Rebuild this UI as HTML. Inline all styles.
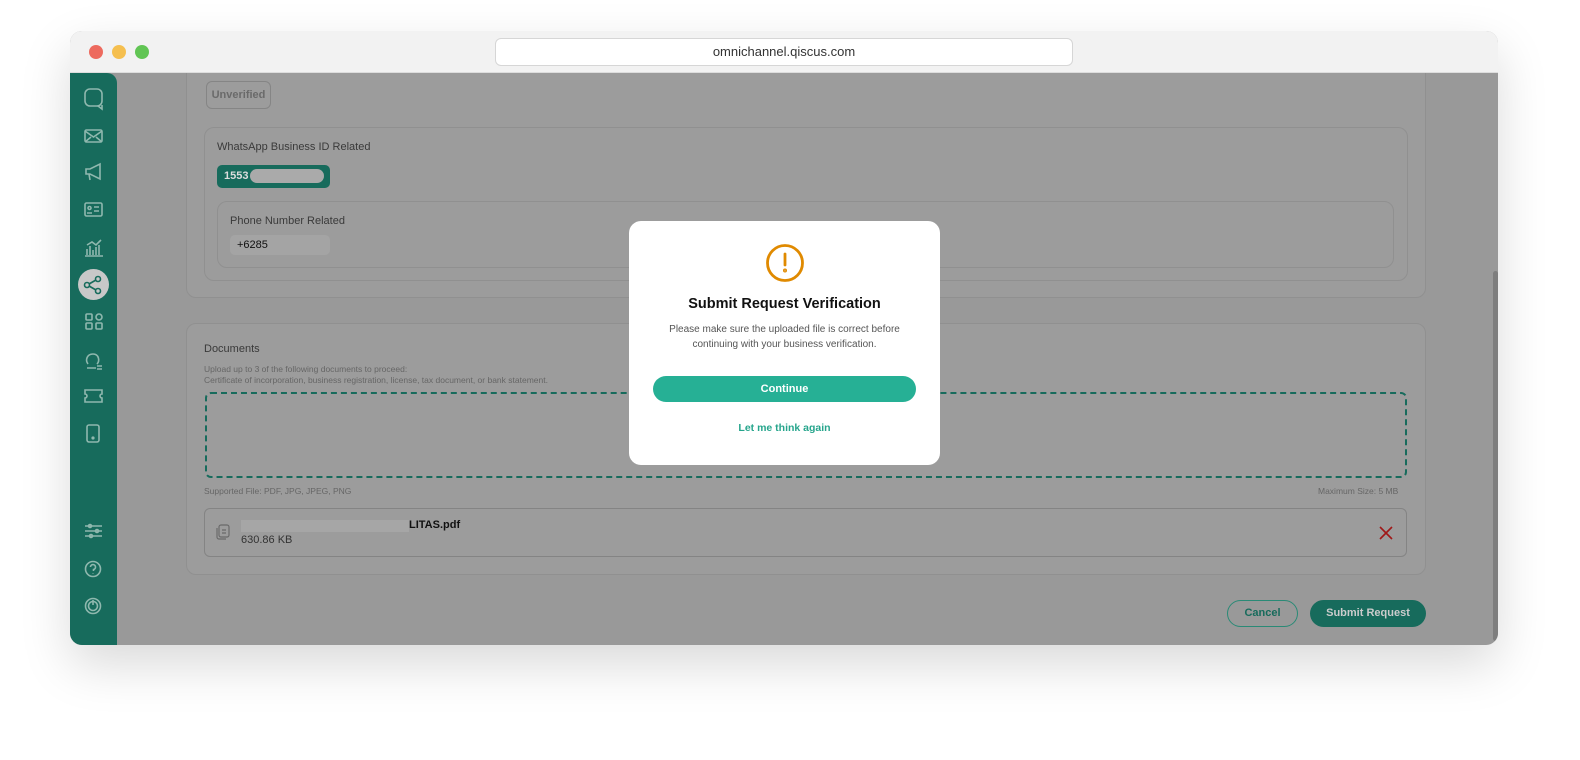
<!DOCTYPE html>
<html><head><style>
*{box-sizing:border-box;margin:0;padding:0}
body{width:1580px;height:760px;background:#fff;font-family:"Liberation Sans",sans-serif;position:relative;overflow:hidden}
.win{position:absolute;left:70px;top:31px;width:1428px;height:614px;border-radius:12px;overflow:hidden;background:#999;box-shadow:0 20px 50px rgba(0,0,0,.15)}
.tb{position:absolute;left:0;top:0;width:100%;height:42px;background:#f2f2f2;border-bottom:1px solid #ddd;z-index:5}
.dot{position:absolute;top:14px;width:14px;height:14px;border-radius:50%}
.url{position:absolute;left:425px;top:7px;width:578px;height:28px;background:#fff;border:1px solid #d6d6d6;border-radius:6px;text-align:center;font-size:13px;line-height:26px;color:#333}
.sb{position:absolute;left:0;top:42px;width:47px;height:572px;background:#176b5c;border-radius:0 10px 0 0}
.abs{position:absolute}
.card{position:absolute;background:#9c9c9c;border:1px solid #909090;border-radius:10px}
.t{position:absolute;white-space:nowrap}
.modal{position:absolute;left:629px;top:221px;width:311px;height:244px;background:#fff;border-radius:12px;text-align:center}
</style></head><body>
<div class="win">
<div class="tb">
<div class="dot" style="left:19px;background:#ed6a5e"></div>
<div class="dot" style="left:42px;background:#f5bf4f"></div>
<div class="dot" style="left:65px;background:#61c554"></div>
<div class="url">omnichannel.qiscus.com</div>
</div>
<div class="sb">
<svg width="47" height="572" fill="none" stroke="#8fb8ae" stroke-width="1.6">
<rect x="15" y="16" width="17" height="17" rx="5"/><path d="M28 33l4 3v-4"/>
<rect x="15" y="57" width="17" height="12" rx="1.5"/><path d="M15 58l8.5 6 8.5-6M15 69l6-5M32 69l-6-5"/>
<path d="M16 96h4l10-5v15l-10-5h-4zM19 101l1 6"/>
<rect x="15" y="130" width="17" height="13" rx="1.5"/><circle cx="19.5" cy="135" r="1.5"/><path d="M17 140h5M24 134h5M24 138h5"/>
<path d="M15 183h18M17 182v-6M20 182v-9M23 182v-5M26 182v-8M29 182v-10M17 172l5-3 4 3 5-5"/>
</svg>
<div class="abs" style="left:8px;top:196px;width:31px;height:31px;border-radius:50%;background:#c8c8c8"></div>
<svg class="abs" style="left:0;top:0" width="47" height="572" fill="none" stroke="#8fb8ae" stroke-width="1.6">
<g stroke="#176b5c"><circle cx="17" cy="212" r="2.5"/><circle cx="28" cy="206" r="2.5"/><circle cx="28" cy="218" r="2.5"/><path d="M19 211l7-4M19 213l7 4"/></g>
<rect x="16" y="241" width="6" height="6" rx="1"/><circle cx="29" cy="244" r="3"/><rect x="16" y="250" width="6" height="6" rx="1"/><rect x="26" y="250" width="6" height="6" rx="1"/>
<path d="M17 295h9M27 293h5M27 296h5M18 291c-3-4-1-10 5-10s7 7 4 10"/>
<path d="M15 317h17v4a2 2 0 0 0 0 4v4h-17v-4a2 2 0 0 0 0-4z"/>
<rect x="17" y="352" width="12" height="17" rx="2"/><circle cx="23" cy="365" r=".8"/>
<path d="M15 453h17M15 458h17M15 463h17"/><circle cx="20" cy="453" r="1.5"/><circle cx="27" cy="458" r="1.5"/><circle cx="21" cy="463" r="1.5"/>
<circle cx="23" cy="496" r="7.5"/><path d="M20.5 494a2.5 2.5 0 1 1 3 2.5v1.5M23 500v.5"/>
<circle cx="23" cy="533" r="7.5"/><circle cx="23" cy="533" r="4.5"/><path d="M23 527v5"/>
</svg>
</div>
<div class="abs" style="left:1423px;top:240px;width:5px;height:370px;background:#7e7e7e;border-radius:3px"></div>
<div class="card" style="left:116px;top:-20px;width:1240px;height:287px"></div>
<div class="abs" style="left:136px;top:50px;width:65px;height:28px;border:1px solid #858585;border-radius:6px;font-size:11px;font-weight:bold;color:#6a6a6a;text-align:center;line-height:26px">Unverified</div>
<div class="card" style="left:134px;top:96px;width:1204px;height:154px"></div>
<div class="t" style="left:147px;top:110px;font-size:11px;color:#3a3a3a">WhatsApp Business ID Related</div>
<div class="abs" style="left:147px;top:134px;width:113px;height:23px;background:#176b5c;border-radius:5px;color:#ddd;font-size:11px;font-weight:bold;line-height:23px;padding-left:7px">1553<span style="display:inline-block;width:74px;height:14px;background:#aaa;border-radius:7px;vertical-align:middle;margin-left:2px"></span></div>
<div class="card" style="left:147px;top:170px;width:1177px;height:67px"></div>
<div class="t" style="left:160px;top:184px;font-size:11px;color:#3a3a3a">Phone Number Related</div>
<div class="abs" style="left:160px;top:204px;width:100px;height:20px;background:#a4a4a4;border-radius:5px;font-size:11px;line-height:20px;padding-left:7px;color:#111">+6285</div>
<div class="card" style="left:116px;top:292px;width:1240px;height:252px"></div>
<div class="t" style="left:134px;top:312px;font-size:11px;color:#3a3a3a">Documents</div>
<div class="t" style="left:134px;top:333px;font-size:8.5px;color:#666">Upload up to 3 of the following documents to proceed:</div>
<div class="t" style="left:134px;top:344px;font-size:8.5px;color:#666">Certificate of incorporation, business registration, license, tax document, or bank statement.</div>
<div class="abs" style="left:135px;top:361px;width:1202px;height:86px;border:2px dashed #176b5c;border-radius:6px"></div>
<div class="t" style="left:134px;top:455px;font-size:8.5px;color:#666">Supported File: PDF, JPG, JPEG, PNG</div>
<div class="t" style="left:1248px;top:455px;font-size:8.5px;color:#666">Maximum Size: 5 MB</div>
<div class="abs" style="left:134px;top:477px;width:1203px;height:49px;border:1px solid #848484;border-radius:6px"></div>
<svg class="abs" style="left:146px;top:493px" width="14" height="16" fill="none" stroke="#6a6a6a" stroke-width="1.2"><rect x="3" y="1" width="10" height="12" rx="2"/><path d="M1 4v9a2 2 0 0 0 2 2h7M6 6h4M6 9h4"/></svg>
<div class="abs" style="left:171px;top:489px;width:168px;height:12px;background:#a6a6a6"></div>
<div class="t" style="left:339px;top:488px;font-size:11px;font-weight:bold;color:#111">LITAS.pdf</div>
<div class="t" style="left:171px;top:503px;font-size:11px;color:#333">630.86 KB</div>
<svg class="abs" style="left:1309px;top:495px" width="14" height="14" stroke="#a01818" stroke-width="1.6"><path d="M1 1l12 12M13 1L1 13"/></svg>
<div class="abs" style="left:1157px;top:569px;width:71px;height:27px;border:1px solid #2a8a76;border-radius:14px;font-size:11px;font-weight:bold;color:#176b5c;text-align:center;line-height:25px">Cancel</div>
<div class="abs" style="left:1240px;top:569px;width:116px;height:27px;background:#176b5c;border-radius:14px;font-size:11px;font-weight:bold;color:#ccc;text-align:center;line-height:27px">Submit Request</div>
</div>
<div class="modal">
<svg style="position:absolute;left:136px;top:22px" width="40" height="40" fill="none" stroke="#e08a00" stroke-width="2.8"><circle cx="20" cy="20" r="17.5"/><path d="M20 11v11" stroke-linecap="round"/><circle cx="20" cy="27.5" r=".6" fill="#e08a00"/></svg>
<div style="position:absolute;left:0;width:100%;top:75px;font-size:14.5px;font-weight:bold;color:#111">Submit Request Verification</div>
<div style="position:absolute;left:0;width:100%;top:101px;font-size:10px;color:#555;line-height:15px">Please make sure the uploaded file is correct before<br>continuing with your business verification.</div>
<div style="position:absolute;left:24px;top:155px;width:263px;height:26px;background:#26b095;border-radius:13px;color:#fff;font-size:11px;font-weight:bold;line-height:26px">Continue</div>
<div style="position:absolute;left:0;width:100%;top:201px;font-size:10.5px;font-weight:bold;color:#26a58c">Let me think again</div>
</div>
</body></html>
